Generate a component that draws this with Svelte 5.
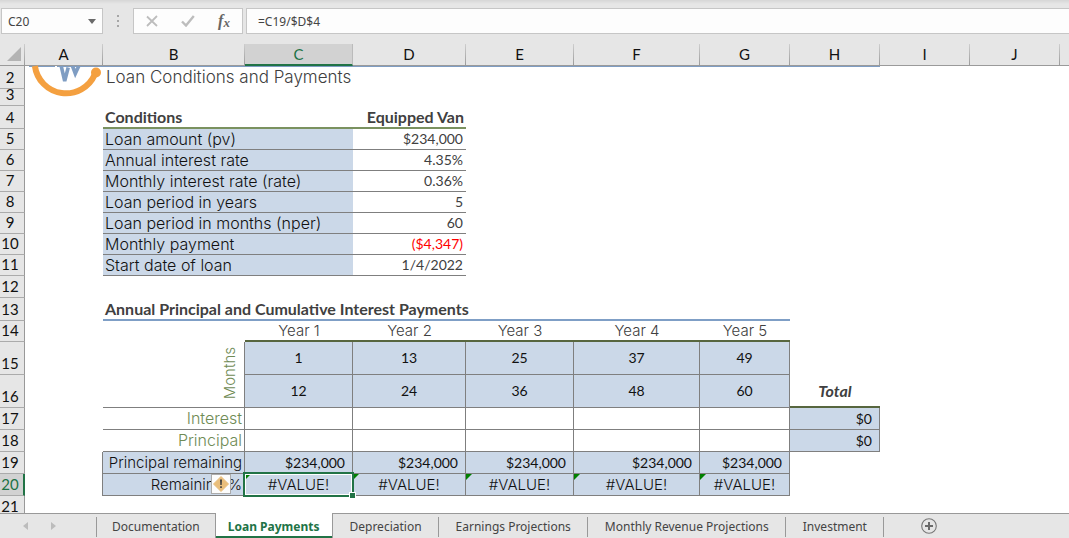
<script>
  let nameBox = $state('C20');
  let formula = $state('=C19/$D$4');
  let activeTab = $state('Loan Payments');

  const columns = ['A', 'B', 'C', 'D', 'E', 'F', 'G', 'H', 'I', 'J'];

  const conditions = [
    { row: 5, label: 'Loan amount (pv)', value: '$234,000' },
    { row: 6, label: 'Annual interest rate', value: '4.35%' },
    { row: 7, label: 'Monthly interest rate (rate)', value: '0.36%' },
    { row: 8, label: 'Loan period in years', value: '5' },
    { row: 9, label: 'Loan period in months (nper)', value: '60' },
    { row: 10, label: 'Monthly payment', value: '($4,347)', negative: true },
    { row: 11, label: 'Start date of loan', value: '1/4/2022' }
  ];

  const years = [
    { name: 'Year 1', start: 1, end: 12, remaining: '$234,000' },
    { name: 'Year 2', start: 13, end: 24, remaining: '$234,000' },
    { name: 'Year 3', start: 25, end: 36, remaining: '$234,000' },
    { name: 'Year 4', start: 37, end: 48, remaining: '$234,000' },
    { name: 'Year 5', start: 49, end: 60, remaining: '$234,000' }
  ];

  const totals = [
    { row: 17, label: 'Interest', total: '$0' },
    { row: 18, label: 'Principal', total: '$0' }
  ];

  const tabs = [
    'Documentation',
    'Loan Payments',
    'Depreciation',
    'Earnings Projections',
    'Monthly Revenue Projections',
    'Investment'
  ];
</script>

<div class="app">
  <div class="formula-bar">
    <div class="name-box">
      <input aria-label="Name box" bind:value={nameBox} />
      <button aria-label="Show names">
        <svg width="8" height="5" viewBox="0 0 8 5"><path d="M0 0h8L4 5z" fill="#6a6a6a" /></svg>
      </button>
    </div>
    <svg class="grip" width="3" height="12" viewBox="0 0 3 12" aria-hidden="true">
      <path d="M0 0h2v2H0zM0 5h2v2H0zM0 10h2v2H0z" fill="#a6a6a6" />
    </svg>
    <div class="actions">
      <button aria-label="Cancel">
        <svg width="12" height="12" viewBox="0 0 12 12"><path d="M1 1.5l10 9.5M11 1L1 11" stroke="#bdbdbd" stroke-width="1.8" fill="none" /></svg>
      </button>
      <button aria-label="Enter">
        <svg width="14" height="12" viewBox="0 0 14 12"><path d="M1 6.5l4 4L12.8 1" stroke="#bdbdbd" stroke-width="2.4" fill="none" /></svg>
      </button>
      <button aria-label="Insert function" class="fx">f<sub>x</sub></button>
    </div>
    <input class="formula" aria-label="Formula" bind:value={formula} />
  </div>

  <div class="sheet">
    <table>
      <colgroup>
        <col class="w-head" /><col class="w-a" /><col class="w-b" /><col class="w-c" /><col class="w-d" />
        <col class="w-c" /><col class="w-f" /><col class="w-g" /><col class="w-g" /><col class="w-g" />
        <col class="w-g" /><col />
      </colgroup>
      <thead>
        <tr>
          <th class="corner">
            <svg width="14" height="14" viewBox="0 0 14 14" aria-hidden="true"><path d="M14 0v14H0z" fill="#b3b3b3" /></svg>
          </th>
          {#each columns as column}
            <th scope="col" class:picked={column === 'C'}>{column}</th>
          {/each}
          <th class="rest"></th>
        </tr>
      </thead>
      <tbody>
        <tr class="h23">
          <th scope="row">2</th>
          <td class="logo-cell">
            <svg class="logo" width="78" height="34" viewBox="0 0 78 34" aria-hidden="true">
              <path d="M4 .5h26M32 .5h46" stroke="#7f9dc3" />
              <path d="M36.2 0L39.7 15 43.2 1.500M47.500 0L50.3 7.500 53.800 0" stroke="#7f9dc3" stroke-width="3.6" fill="none" />
              <path d="M9.900 0A31.400 31.400 0 0 0 69.800 8.500" stroke="#f4a040" stroke-width="6" fill="none" />
              <circle cx="71" cy="6.5" r="5" fill="#f4a040" />
            </svg>
          </td>
          <td class="rule title">Loan Conditions and Payments</td>
          {#each years as year}<td class="rule"></td>{/each}
          <td class="rule"></td>
        </tr>
        <tr class="h17"><th scope="row">3</th></tr>
        <tr class="h23">
          <th scope="row">4</th>
          <td></td>
          <td class="heading moss">Conditions</td>
          <td class="moss"></td>
          <td class="heading moss right">Equipped Van</td>
        </tr>
        {#each conditions as item}
          <tr class="h21">
            <th scope="row">{item.row}</th>
            <td></td>
            <td class="fill under label">{item.label}</td>
            <td class="fill under"></td>
            <td class="under right number" class:negative={item.negative}>{item.value}</td>
          </tr>
        {/each}
        <tr class="h22"><th scope="row">12</th></tr>
        <tr class="h23">
          <th scope="row">13</th>
          <td></td>
          <td class="heading blue">Annual Principal and Cumulative Interest Payments</td>
          {#each years as year}<td class="blue"></td>{/each}
        </tr>
        <tr class="h21">
          <th scope="row">14</th>
          <td></td>
          <td></td>
          {#each years as year}<td class="olive center soft">{year.name}</td>{/each}
        </tr>
        <tr class="h33">
          <th scope="row">15</th>
          <td></td>
          <td class="under side months" rowspan="2"><span>Months</span></td>
          {#each years as year}<td class="fill under side center number">{year.start}</td>{/each}
        </tr>
        <tr class="h33">
          <th scope="row">16</th>
          <td></td>
          {#each years as year}<td class="fill under side center number">{year.end}</td>{/each}
          <td class="heading olive center total">Total</td>
        </tr>
        {#each totals as item}
          <tr class="h22">
            <th scope="row">{item.row}</th>
            <td></td>
            <td class="under side right label green">{item.label}</td>
            {#each years as year}<td class="under side"></td>{/each}
            <td class="fill under side money">{item.total}</td>
          </tr>
        {/each}
        <tr class="h22">
          <th scope="row">19</th>
          <td class="side"></td>
          <td class="fill under side right">Principal remaining</td>
          {#each years as year}<td class="fill under side money">{year.remaining}</td>{/each}
        </tr>
        <tr class="h22">
          <th scope="row" class="picked">20</th>
          <td class="side"></td>
          <td class="fill under side right anchor">
            Remaining %
            <button class="warning" aria-label="Error checking options">
              <svg width="18" height="18" viewBox="0 0 18 18">
                <path d="M9 1.5L16.5 9 9 16.5 1.5 9z" fill="#e9be7c" stroke="#e9be7c" stroke-linejoin="round" />
                <path d="M8 4.5h2l-.3 5.5H8.3zM8.2 11.3h1.6v1.7H8.2z" fill="#404040" />
              </svg>
            </button>
          </td>
          {#each years as year, i}
            <td class="fill under side center anchor error">
              #VALUE!
              {#if i === 0}<span class="selection"></span>{/if}
            </td>
          {/each}
        </tr>
        <tr class="h22"><th scope="row">21</th></tr>
      </tbody>
    </table>
  </div>

  <nav class="tabs" aria-label="Sheets">
    <div class="arrows">
      <button aria-label="Previous sheet"><svg width="5" height="8" viewBox="0 0 5 8"><path d="M5 0v8L0 4z" fill="#bcbcbc" /></svg></button>
      <button aria-label="Next sheet"><svg width="5" height="8" viewBox="0 0 5 8"><path d="M0 0v8l5-4z" fill="#bcbcbc" /></svg></button>
    </div>
    {#each tabs as tab, i}
      <button
        class="tab"
        class:active={tab === activeTab}
        class:divided={tab !== activeTab && tabs[i + 1] !== activeTab}
        onclick={() => (activeTab = tab)}>{tab}</button>
    {/each}
    <button class="add" aria-label="New sheet">
      <svg width="16" height="16" viewBox="0 0 16 16">
        <circle cx="8" cy="8" r="7.3" fill="none" stroke="#777" stroke-width="1.1" />
        <path d="M8 4v8M4 8h8" stroke="#6a6a6a" stroke-width="2" />
      </svg>
    </button>
  </nav>
</div>

<style>
  :global(body) {
    margin: 0;
  }

  .app {
    --fill: #cbd8e8;
    --line: #7f7f7f;
    --excel: #217346;
    --chrome: #e6e6e6;
    display: flex;
    flex-direction: column;
    height: 100vh;
    background: #fff;
    font-family: 'Noto Sans', sans-serif;
    font-size: 12px;
    color: #444;
    overflow: hidden;
  }

  button,
  input {
    margin: 0;
    padding: 0;
    border: 0;
    background: none;
    font: inherit;
    color: inherit;
  }

  button {
    display: flex;
    align-items: center;
    justify-content: center;
  }

  input {
    min-width: 0;
    outline: none;
  }

  .formula-bar {
    display: flex;
    align-items: center;
    box-sizing: border-box;
    flex: none;
    height: 44px;
    padding: 8px 0 10px 1px;
    background: linear-gradient(#d6d6d6, var(--chrome) 4px);
  }

  .name-box,
  .actions,
  .formula {
    box-sizing: border-box;
    height: 26px;
    border: 1px solid #c6c6c6;
    background: #fdfdfd;
  }

  .name-box {
    display: flex;
    width: 102px;
    padding: 0 6px;
  }

  .name-box input {
    flex: 1;
  }

  .grip {
    margin: 0 13px 0 14px;
  }

  .actions {
    display: flex;
    width: 110px;
    margin-right: 3px;
  }

  .actions button {
    flex: 1;
  }

  .fx {
    font: italic bold 16px 'Liberation Serif', serif;
    color: #666;
  }

  .fx sub {
    font-size: 13px;
    line-height: 12px;
    padding-top: 3px;
  }

  .formula {
    flex: 1;
    padding: 0 11px;
    border-right: 0;
  }

  .sheet {
    flex: 1;
    min-height: 0;
    overflow: hidden;
    font: 300 15px Inter, sans-serif;
  }

  table {
    width: 100%;
    table-layout: fixed;
    border-collapse: separate;
    border-spacing: 0;
  }

  .w-head { width: 25px; }
  .w-a { width: 78px; }
  .w-b { width: 142px; }
  .w-c { width: 108px; }
  .w-d { width: 113px; }
  .w-f { width: 126px; }
  .w-g { width: 90px; }

  th,
  td {
    box-sizing: border-box;
    padding: 0;
    line-height: 14px;
    white-space: nowrap;
    color: #111;
  }

  th {
    background: var(--chrome);
    font: 400 15px Lato, sans-serif;
    line-height: 14px;
  }

  thead th {
    height: 22px;
    padding-bottom: 1px;
    border-bottom: 1px solid #999;
    border-right: 1px solid;
    border-image: linear-gradient(#d0d0d0, #999) 1;
  }

  thead th.picked {
    padding-bottom: 0;
    border-bottom: 2px solid var(--excel);
    border-right: 1px solid #bbb;
    border-image: none;
    background: #d2d2d2;
    color: var(--excel);
  }

  thead th.rest {
    border-right: 0;
  }

  .corner svg {
    display: block;
    margin-left: 7px;
  }

  tbody th {
    vertical-align: bottom;
    padding-bottom: 5px;
    padding-right: 4px;
    border-right: 1px solid #999;
    border-bottom: 1px solid #ababab;
    line-height: 11px;
  }

  tbody th.picked {
    padding-right: 3px;
    border-right: 2px solid var(--excel);
    background: #d2d2d2;
    color: var(--excel);
  }

  .h17 { height: 17px; }
  .h21 { height: 21px; }
  .h22 { height: 22px; }
  .h23 { height: 23px; }
  .h33 { height: 33px; }

  td {
    padding: 0 2px;
  }

  .logo-cell {
    padding: 0;
    position: relative;
  }

  .logo {
    position: absolute;
    top: 0;
    left: 0;
    overflow: visible;
  }

  .rule {
    border-top: 1px solid #7f9dc3;
  }

  .title {
    padding: 0 3px 3px;
    font-size: 17px;
    color: #404040;
  }

  .label {
    padding-bottom: 1px;
    font-size: 16px;
  }

  .heading {
    font: 700 16px Lato, sans-serif;
    line-height: 14px;
    color: #404040;
  }

  .moss { border-bottom: 2px solid #7a915f; }
  .blue { border-bottom: 2px solid #7f9fc6; }
  .olive { border-bottom: 2px solid #57663f; }
  .under { border-bottom: 1px solid var(--line); }
  .side { border-right: 1px solid var(--line); }
  .fill { background: var(--fill); }
  .right { text-align: right; }
  .center { text-align: center; }
  .soft { color: #404040; }
  .green { color: #6f8b55; }

  .number,
  .money {
    font: 400 14px Lato, sans-serif;
    line-height: 14px;
  }

  .number {
    padding: 0 3px;
  }

  .number:not(.fill) {
    color: #404040;
  }

  td.negative {
    color: #f00 !important;
  }

  .money {
    padding-right: 7px;
    text-align: right;
  }

  .total {
    font-style: italic;
  }

  .months {
    padding: 0 5px 6px 0;
    vertical-align: bottom;
    text-align: right;
    color: #6f8b55;
  }

  .months span {
    display: inline-block;
    writing-mode: vertical-rl;
    transform: rotate(180deg);
    line-height: 18px;
  }

  .anchor {
    position: relative;
  }

  .error::before {
    content: '';
    position: absolute;
    top: 0;
    left: 0;
    border: 3px solid transparent;
    border-top-color: #008000;
    border-left-color: #008000;
  }

  .selection {
    position: absolute;
    z-index: 1;
    inset: -2px;
    border: 2px solid var(--excel);
    box-shadow: inset 0 0 0 1px #fff;
  }

  .selection::after {
    content: '';
    position: absolute;
    right: -4px;
    bottom: -4px;
    width: 5px;
    height: 5px;
    border: 1px solid #fff;
    background: var(--excel);
  }

  .warning {
    position: absolute;
    top: 0;
    right: 13px;
    box-sizing: border-box;
    width: 20px;
    height: 20px;
    border: 1px solid #ababab;
    background: #fcfcfc;
  }

  .tabs {
    display: flex;
    flex: none;
    box-sizing: border-box;
    height: 25px;
    border-top: 1px solid #999;
    background: var(--chrome);
  }

  .arrows {
    display: flex;
    align-items: center;
    gap: 23px;
    box-sizing: border-box;
    width: 97px;
    padding-left: 23px;
    background: linear-gradient(#999, #999) right 0 top 3px / 1px 20px no-repeat;
  }

  .tab {
    padding: 0 17px;
    white-space: nowrap;
  }

  .arrows + .tab {
    padding: 0 15px;
  }

  .divided {
    background: linear-gradient(#999, #999) right 0 top 3px / 1px 20px no-repeat;
  }

  .tab.active {
    margin-top: -1px;
    padding: 1px 12px 0;
    border: solid #999;
    border-width: 0 1px;
    box-shadow: inset 0 -2px var(--excel);
    background: #fff;
    font-weight: 700;
    color: var(--excel);
  }

  .add {
    margin-left: 37px;
  }
</style>
